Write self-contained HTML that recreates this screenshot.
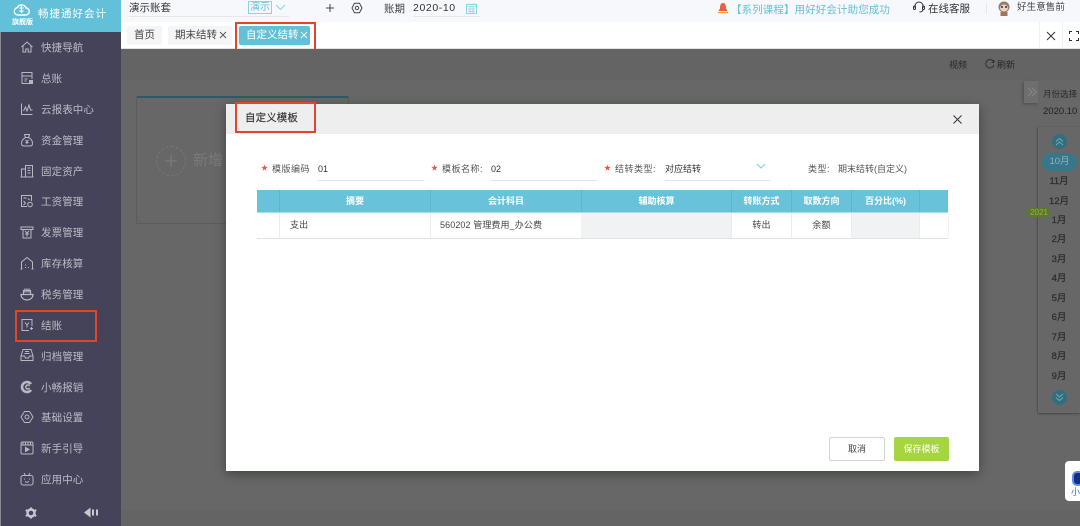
<!DOCTYPE html>
<html lang="zh"><head><meta charset="utf-8"><title>自定义模板</title>
<style>
html,body{margin:0;padding:0;width:1080px;height:526px;overflow:hidden;background:#666766}
body{position:relative;font-family:"Liberation Sans","Noto Sans CJK SC",sans-serif;color:#333}
div,span,svg{position:absolute;box-sizing:border-box}
.t{white-space:nowrap;line-height:14px}
.nav{left:41px;font-size:10.5px;color:#bcbcc5;letter-spacing:.1px;white-space:nowrap;line-height:14px}
.ic{left:20px;width:14px;height:14px;fill:none;stroke:#b8b8c1;stroke-width:1}
.red{border:2px solid #e5432a}
.star{color:#f0503c;font-size:7px;line-height:12px}
.lab{font-size:9px;color:#555;letter-spacing:.5px;line-height:14px;white-space:nowrap}
.val{font-size:9px;color:#333;line-height:14px;white-space:nowrap}
.ul{height:1px;background:#e4e4e4}
.th{top:190px;height:22px;line-height:22px;text-align:center;color:#fff;font-size:9px;font-weight:bold;white-space:nowrap}
.td{top:213px;height:25px;line-height:25px;font-size:9px;color:#444;text-align:center;white-space:nowrap;letter-spacing:.1px}
.vl{width:1px}
.m{width:40px;left:1039px;text-align:center;font-size:9.5px;font-weight:normal;-webkit-text-stroke:.2px #2b2c2c;color:#2b2c2c;line-height:14px}
</style></head><body>

<!-- sidebar -->
<div style="left:0;top:0;width:121px;height:526px;background:#45435a;border-left:1px solid #88888f"></div>
<div style="left:0;top:0;width:121px;height:32px;background:#62c1d9"></div>
<svg style="left:13px;top:3px;width:17px;height:13px" viewBox="0 0 16 13"><path d="M4 12h8a3.500 3.500 0 0 0 .5-7A4.600 4.600 0 0 0 4 4.500 3.800 3.800 0 0 0 4 12z" fill="none" stroke="#fff" stroke-width="1.400"/><path d="M8 3v7M6 5h4M6 8h4" stroke="#fff" stroke-width="1.200"/></svg>
<div class="t" style="left:38px;top:7px;font-size:10.500px;color:#fff;letter-spacing:1px">畅捷通好会计</div>
<div class="t" style="left:12px;top:16px;font-size:7px;color:#fff;font-weight:bold">旗舰版</div>

<svg class="ic" style="top:40px" viewBox="0 0 14 14"><path d="M1.500 7L7 2l5.500 5M3 6v6h2.800V9h2.400v3H11V6"/></svg>
<div class="nav" style="top:41px">快捷导航</div>
<svg class="ic" style="top:71px" viewBox="0 0 14 14"><path d="M9 12.500H2V1.500h10V8M2 5h10M4.500 8h3M4.500 10h2"/><rect x="9.500" y="9.500" width="3" height="3" fill="#b4b4bd"/></svg>
<div class="nav" style="top:72px">总账</div>
<svg class="ic" style="top:102px" viewBox="0 0 14 14"><path d="M1.500 1.500v11h11M3.500 9l2-4 1.500 4 2-6 1.500 5h2"/></svg>
<div class="nav" style="top:103px">云报表中心</div>
<svg class="ic" style="top:133px" viewBox="0 0 14 14"><path d="M4.500 1.500h5L8.500 4.500h-3zM5.500 4.500C2.500 6 1.500 8.500 1.500 10.500c0 1.500 1 2.500 2.500 2.500h6c1.500 0 2.500-1 2.500-2.500 0-2-1-4.500-4-6M5.500 7L7 8.500 8.500 7M7 8.500V11M5.500 9.500h3"/></svg>
<div class="nav" style="top:134px">资金管理</div>
<svg class="ic" style="top:164px" viewBox="0 0 14 14"><path d="M1.500 13V5h4M5.500 13V1.500h7V13M.5 13h13M7.500 4h3M7.500 6.500h3M7.500 9h3"/></svg>
<div class="nav" style="top:165px">固定资产</div>
<svg class="ic" style="top:194px" viewBox="0 0 14 14"><path d="M7 12.500H1.500v-11h10V7M3.500 4h3M3.500 7l2 2-2 2M8 4.500l1.500 1.500"/><circle cx="10" cy="10.500" r="2.300"/></svg>
<div class="nav" style="top:195px">工资管理</div>
<svg class="ic" style="top:225px" viewBox="0 0 14 14"><path d="M1 2h12v2.500H1zM3 4.500v8.500h8V4.500M5 6l2 2 2-2M5 9h4M7 8v3.500"/></svg>
<div class="nav" style="top:226px">发票管理</div>
<svg class="ic" style="top:256px" viewBox="0 0 14 14"><path d="M1.500 13V6L7 1.500 12.500 6v7M.5 13h2M11.500 13h2M5 9h1M5 11.500h1M8 11.500h1"/></svg>
<div class="nav" style="top:257px">库存核算</div>
<svg class="ic" style="top:287px" viewBox="0 0 14 14"><path d="M1 7.500h12c0 3-2.500 5.500-6 5.500S1 10.500 1 7.500zM3.500 7V3.500h7V7M5 1.500v4M7 1.500v4M9 1.500v4" stroke-width="1.200"/></svg>
<div class="nav" style="top:288px">税务管理</div>
<svg class="ic" style="top:318px" viewBox="0 0 14 14"><path d="M9 12.500H2V1.500h10V8M5 4.500L7 7l2-2.500M7 7v2.500M10 10.500h3M11.500 9v3"/></svg>
<div class="nav" style="top:319px">结账</div>
<svg class="ic" style="top:348px" viewBox="0 0 14 14"><path d="M1 8l2-6.500h8L13 8v4.500H1zM1 8h3.500l1 2h3l1-2H13M5 3.500h4M4.500 5.500h5"/></svg>
<div class="nav" style="top:350px">归档管理</div>
<svg class="ic" style="top:380px;stroke-width:2.600" viewBox="0 0 14 14"><path d="M11 4a5 5 0 1 0 0 6"/><path d="M9.500 6a2 2 0 1 0 0 2" stroke-width="1.500"/></svg>
<div class="nav" style="top:381px">小畅报销</div>
<svg class="ic" style="top:410px" viewBox="0 0 14 14"><path d="M4.500 1.500h5L13 7l-3.500 5.500h-5L1 7z" stroke-linejoin="round"/><circle cx="7" cy="7" r="2"/></svg>
<div class="nav" style="top:411px">基础设置</div>
<svg class="ic" style="top:441px" viewBox="0 0 14 14"><rect x="1" y="1" width="12" height="12" rx="1.500"/><path d="M1 4h12M3 1v3M5.500 1v3M8 1v3M10.500 1v3"/><path d="M5.500 6.500v4l3.500-2z" fill="#b4b4bd"/></svg>
<div class="nav" style="top:442px">新手引导</div>
<svg class="ic" style="top:472px" viewBox="0 0 14 14"><rect x="1" y="3.500" width="12" height="9.500" rx="2"/><path d="M4 1l1.500 2.500M10 1L8.500 3.500M4.500 6.500v1M9.500 6.500v1M5 9.500q2 1.500 4 0"/></svg>
<div class="nav" style="top:473px">应用中心</div>
<svg style="left:25px;top:507px;width:12px;height:12px" viewBox="0 0 12 12"><circle cx="6" cy="6" r="3.500" fill="none" stroke="#c8c8ce" stroke-width="2.400"/><path d="M6 .5v2M6 9.500v2M.8 3l1.700 1M9.500 8l1.700 1M.8 9l1.700-1M9.500 4l1.700-1" stroke="#c8c8ce" stroke-width="2"/></svg>
<svg style="left:84px;top:507px;width:15px;height:11px" viewBox="0 0 15 11"><path d="M0 5.500L6.500 .5v10z" fill="#c8c8ce"/><path d="M9 2.500v6M13 2.500v6" stroke="#c8c8ce" stroke-width="2"/></svg>

<!-- top bar -->
<div style="left:121px;top:0;width:959px;height:22px;background:#f6f8fc"></div>
<div class="t" style="left:129px;top:1px;font-size:10.500px;color:#333">演示账套</div>
<div style="left:129px;top:16px;width:160px;height:1px;background:#e8e8e8"></div>
<div class="t" style="left:248px;top:1px;font-size:10px;color:#62c1d9;border:1px solid #8fd3e4;height:13px;line-height:11px;padding:0 1px">演示</div>
<svg style="left:275px;top:4px;width:11px;height:7px" viewBox="0 0 11 7"><path d="M1 1l4.500 4.500L10 1" fill="none" stroke="#8fd3e4"/></svg>
<svg style="left:325px;top:3px;width:10px;height:10px" viewBox="0 0 10 10"><path d="M5 1v8M1 5h8" stroke="#444"/></svg>
<svg style="left:351px;top:2px;width:12px;height:12px" viewBox="0 0 12 12"><path d="M3.500 1.300h5L11 6l-2.500 4.700h-5L1 6z" fill="none" stroke="#444"/><circle cx="6" cy="6" r="1.700" fill="none" stroke="#444"/></svg>
<div class="t" style="left:384px;top:2px;font-size:10.500px;color:#444">账期</div>
<div class="t" style="left:413px;top:1px;font-size:10.500px;color:#333;letter-spacing:.6px">2020-10</div>
<div style="left:413px;top:16px;width:67px;height:1px;background:#e8e8e8"></div>
<svg style="left:466px;top:3px;width:11px;height:11px" viewBox="0 0 11 11"><rect x=".5" y="1.500" width="10" height="9" fill="none" stroke="#8fd3e4"/><path d="M0 3.500h11M3 0v2M8 0v2M2 6h7M2 8.300h7M4 4v6M7 4v6" stroke="#8fd3e4" stroke-width=".8"/></svg>
<svg style="left:717px;top:2px;width:12px;height:13px" viewBox="0 0 12 13"><path d="M6 1C3.500 1 3 3.500 3 6.500L1.500 9h9L9 6.500C9 3.500 8.500 1 6 1z" fill="#e9603a"/><path d="M1 10.500h10" stroke="#efa43c" stroke-width="1.500"/></svg>
<div class="t" style="left:731px;top:3px;font-size:10.500px;color:#62c1d9;letter-spacing:.1px">【系列课程】用好好会计助您成功</div>
<svg style="left:912px;top:1px;width:14px;height:13px" viewBox="0 0 14 13"><path d="M3 7V5a4 4 0 0 1 8 0v2M11 8c0 2-1.500 3-3.500 3" fill="none" stroke="#333"/><rect x="1.500" y="5" width="2" height="3.500" rx="1" fill="none" stroke="#333"/><rect x="10.500" y="5" width="2" height="3.500" rx="1" fill="none" stroke="#333"/></svg>
<div class="t" style="left:928px;top:2px;font-size:10.500px;color:#333">在线客服</div>
<div style="left:986px;top:3px;width:1px;height:11px;background:#e6e6e6"></div>
<svg style="left:997px;top:1px;width:14px;height:15px" viewBox="0 0 14 15"><circle cx="7" cy="6" r="5.500" fill="#9b7b68"/><ellipse cx="7" cy="7" rx="4" ry="3.500" fill="#e8d3c5"/><circle cx="5" cy="6" r="1" fill="#333"/><circle cx="9" cy="6" r="1" fill="#333"/><rect x="3.500" y="11" width="7" height="4" fill="#a5715a"/></svg>
<div class="t" style="left:1017px;top:1px;font-size:9.500px;color:#444;letter-spacing:.1px">好生意售前</div>

<!-- tab row -->
<div style="left:121px;top:22px;width:959px;height:27px;background:#fff;border-bottom:1px solid #e2e2e2"></div>
<div class="t" style="left:127px;top:26px;width:35px;height:19px;background:#f5f5f5;border-radius:2px;font-size:10.500px;line-height:19px;text-align:center;color:#444">首页</div>
<div class="t" style="left:168px;top:26px;width:64px;height:19px;background:#f5f5f5;border-radius:2px;font-size:10.500px;line-height:19px;padding-left:7px;color:#444">期末结转</div>
<svg style="left:219px;top:31px;width:8px;height:8px" viewBox="0 0 8 8"><path d="M1 1l6 6M7 1L1 7" stroke="#555" stroke-width=".9"/></svg>
<div class="t" style="left:239px;top:26px;width:71px;height:19px;background:#62c1d9;border-radius:2px;font-size:10.500px;line-height:19px;padding-left:7px;color:#fff">自定义结转</div>
<svg style="left:300px;top:31px;width:8px;height:8px" viewBox="0 0 8 8"><path d="M1 1l6 6M7 1L1 7" stroke="#fff" stroke-width=".9"/></svg>
<div class="red" style="left:235px;top:22px;width:81px;height:31px"></div>
<div style="left:1039px;top:22px;width:1px;height:26px;background:#efefef"></div>
<div style="left:1062px;top:22px;width:1px;height:26px;background:#efefef"></div>
<svg style="left:1046px;top:31px;width:10px;height:10px" viewBox="0 0 10 10"><path d="M1 1l8 8M9 1L1 9" stroke="#333"/></svg>
<svg style="left:1069px;top:31px;width:10px;height:10px" viewBox="0 0 10 10"><path d="M.5 3V.5H3M7 .5h2.500V3M9.500 7v2.500H7M3 9.500H.5V7" fill="none" stroke="#333"/></svg>

<!-- background page dimmed -->
<div style="left:121px;top:49px;width:959px;height:31px;background:#636463"></div>
<div class="t" style="left:949px;top:58px;font-size:9px;color:#262727">视频</div>
<svg style="left:985px;top:59px;width:10px;height:10px" viewBox="0 0 10 10"><path d="M8.800 3A4.200 4.200 0 1 0 9 6M9 1v2.300H6.700" fill="none" stroke="#262727" stroke-width=".8"/></svg>
<div class="t" style="left:997px;top:58px;font-size:9px;color:#262727">刷新</div>
<div style="left:121px;top:510px;width:959px;height:16px;background:#636463"></div>
<div style="left:136px;top:96px;width:213px;height:128px;border:1px solid #5c5c5c;border-top:2px solid #2d5a66;border-radius:2px"></div>
<div style="left:156px;top:146px;width:30px;height:30px;border:1px dashed #767676;border-radius:50%"></div>
<svg style="left:164px;top:154px;width:14px;height:14px" viewBox="0 0 14 14"><path d="M7 1v12M1 7h12" stroke="#7a7a7a" stroke-width="1.200"/></svg>
<div class="t" style="left:193px;top:152px;font-size:15px;line-height:18px;color:#7a7a7a">新增</div>

<!-- month panel -->
<div style="left:1024px;top:81px;width:15px;height:22px;background:#6d6e6d;box-shadow:-1px 1px 3px rgba(0,0,0,.25)"></div>
<svg style="left:1027px;top:87px;width:10px;height:10px" viewBox="0 0 10 10"><path d="M1 1l4 4-4 4M5 1l4 4-4 4" fill="none" stroke="#888"/></svg>
<div style="left:1038px;top:80px;width:42px;height:47px;background:#666766"></div>
<div style="left:1038px;top:127px;width:42px;height:286px;background:#666766;box-shadow:0 1px 2px rgba(0,0,0,.3),-1px 0 1px rgba(0,0,0,.12)"></div>
<div class="t" style="left:1043px;top:87px;font-size:8.500px;color:#2a2b2b">月份选择</div>
<div class="t" style="left:1043px;top:105px;font-size:9.500px;color:#222">2020.10</div>
<div style="left:1052px;top:134px;width:15px;height:15px;border-radius:50%;background:#2f6f80"></div>
<svg style="left:1055px;top:137px;width:9px;height:9px" viewBox="0 0 9 9"><path d="M1 4.500l3.500-3 3.500 3M1 8l3.500-3 3.500 3" fill="none" stroke="#7fa5af"/></svg>
<div class="t" style="left:1042px;top:153px;width:35px;height:18px;border-radius:9px;background:#36788a;color:#8fb3bd;font-size:9.500px;line-height:18px;text-align:center">10月</div>
<div class="t m" style="top:175px">11月</div>
<div class="t m" style="top:195px">12月</div>
<div class="t m" style="top:214px">1月</div>
<div class="t m" style="top:233px">2月</div>
<div class="t m" style="top:253px">3月</div>
<div class="t m" style="top:272px">4月</div>
<div class="t m" style="top:292px">5月</div>
<div class="t m" style="top:311px">6月</div>
<div class="t m" style="top:331px">7月</div>
<div class="t m" style="top:350px">8月</div>
<div class="t m" style="top:370px">9月</div>
<div style="left:1052px;top:390px;width:15px;height:15px;border-radius:50%;background:#2f6f80"></div>
<svg style="left:1055px;top:393px;width:9px;height:9px" viewBox="0 0 9 9"><path d="M1 1l3.500 3L8 1M1 4.500l3.500 3 3.500-3" fill="none" stroke="#7fa5af"/></svg>
<div class="t" style="left:1028px;top:208px;width:22px;height:9px;background:#5c7a22;border-radius:3px;font-size:8px;line-height:9px;text-align:center;color:#97aa6b">2021</div>

<!-- float widget -->
<div style="left:1065px;top:461px;width:20px;height:40px;background:#fff;border-radius:4px 0 0 4px"></div>
<div style="left:1072px;top:471px;width:12px;height:15px;border-radius:5px;background:#15307f;border:2px solid #5d8cf0"></div>
<div class="t" style="left:1071px;top:487px;font-size:9px;line-height:11px;color:#3d6cf0">小</div>

<!-- modal -->
<div style="left:226px;top:104px;width:753px;height:367px;background:#fff;box-shadow:0 3px 10px rgba(0,0,0,.35)"></div>
<div style="left:226px;top:104px;width:753px;height:30px;background:#eeeeee"></div>
<div class="t" style="left:245px;top:111px;font-size:10.500px;color:#333;-webkit-text-stroke:.15px #333;letter-spacing:.1px">自定义模板</div>
<div class="red" style="left:235px;top:102px;width:81px;height:31px"></div>
<svg style="left:953px;top:115px;width:9px;height:9px" viewBox="0 0 9 9"><path d="M.5.500l8 8M8.500.500l-8 8" stroke="#333"/></svg>

<div class="star" style="left:261px;top:163px">★</div>
<div class="lab" style="left:272px;top:162px">模版编码</div>
<div class="val" style="left:318px;top:162px">01</div>
<div class="ul" style="left:318px;top:180px;width:106px"></div>
<div class="star" style="left:431px;top:163px">★</div>
<div class="lab" style="left:442px;top:162px">模板名称:</div>
<div class="val" style="left:491px;top:162px">02</div>
<div class="ul" style="left:491px;top:180px;width:106px"></div>
<div class="star" style="left:604px;top:163px">★</div>
<div class="lab" style="left:615px;top:162px">结转类型:</div>
<div class="val" style="left:665px;top:162px">对应结转</div>
<div class="ul" style="left:665px;top:180px;width:105px"></div>
<svg style="left:756px;top:163px;width:10px;height:7px" viewBox="0 0 10 7"><path d="M1 1l4 4 4-4" fill="none" stroke="#7fcde0"/></svg>
<div class="lab" style="left:808px;top:162px">类型:</div>
<div class="val" style="left:838px;top:162px;color:#555">期末结转(自定义)</div>

<!-- table -->
<div style="left:257px;top:190px;width:691px;height:22px;background:#68c3da"></div>
<div style="left:257px;top:212px;width:691px;height:1px;background:#a8dde9"></div>
<div style="left:581px;top:213px;width:150px;height:25px;background:#f1f2f3"></div>
<div style="left:852px;top:213px;width:67px;height:25px;background:#f1f2f3"></div>
<div style="left:257px;top:238px;width:691px;height:1px;background:#e2e2e2"></div>
<div style="left:948px;top:213px;width:1px;height:25px;background:#f1f1f1"></div>
<div class="vl" style="left:279px;top:190px;height:22px;background:#60b5ca"></div>
<div class="vl" style="left:430px;top:190px;height:22px;background:#60b5ca"></div>
<div class="vl" style="left:581px;top:190px;height:22px;background:#60b5ca"></div>
<div class="vl" style="left:731px;top:190px;height:22px;background:#60b5ca"></div>
<div class="vl" style="left:791px;top:190px;height:22px;background:#60b5ca"></div>
<div class="vl" style="left:851px;top:190px;height:22px;background:#60b5ca"></div>
<div class="vl" style="left:919px;top:190px;height:22px;background:#60b5ca"></div>
<div class="vl" style="left:279px;top:213px;height:25px;background:#ececec"></div>
<div class="vl" style="left:430px;top:213px;height:25px;background:#ececec"></div>
<div class="vl" style="left:731px;top:213px;height:25px;background:#ececec"></div>
<div class="vl" style="left:791px;top:213px;height:25px;background:#ececec"></div>
<div class="vl" style="left:851px;top:213px;height:25px;background:#ececec"></div>
<div class="vl" style="left:919px;top:213px;height:25px;background:#ececec"></div>
<div class="th" style="left:280px;width:150px">摘要</div>
<div class="th" style="left:431px;width:150px">会计科目</div>
<div class="th" style="left:582px;width:149px">辅助核算</div>
<div class="th" style="left:732px;width:59px">转账方式</div>
<div class="th" style="left:792px;width:59px">取数方向</div>
<div class="th" style="left:852px;width:67px">百分比(%)</div>
<div class="td" style="left:290px">支出</div>
<div class="td" style="left:440px">560202 管理费用_办公费</div>
<div class="td" style="left:732px;width:59px">转出</div>
<div class="td" style="left:792px;width:59px">余额</div>

<!-- buttons -->
<div style="left:829px;top:437px;width:56px;height:24px;border:1px solid #d4d4d4;border-radius:2px;background:#fff;text-align:center;font-size:9px;line-height:22px;color:#444">取消</div>
<div style="left:894px;top:437px;width:55px;height:24px;border-radius:2px;background:#a5d63f;text-align:center;font-size:9px;line-height:24px;color:#fff">保存模板</div>

<!-- sidebar highlight -->
<div class="red" style="left:15px;top:310px;width:82px;height:32px"></div>
</body></html>
